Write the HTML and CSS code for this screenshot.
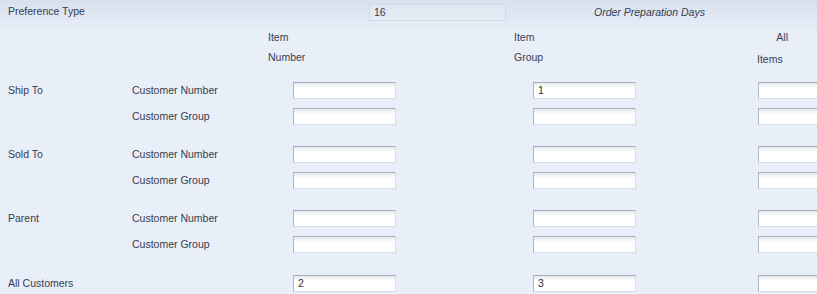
FILE: index.html
```html
<!DOCTYPE html>
<html lang="en">
<head>
  <meta charset="UTF-8" />
  <title>Preference Profile</title>
  <link rel="stylesheet" href="styles.css">
</head>
<body>
  <div class="pref-bar">
    <span class="pref-label">Preference Type</span>
    <span class="pref-value">16</span>
    <span class="pref-title">Order Preparation Days</span>
  </div>

  <div class="heads">
    <div class="head head-number">Item<br>Number</div>
    <div class="head head-group">Item<br>Group</div>
    <div class="head head-all"><span class="all">All</span><span class="items">Items</span></div>
  </div>

  <div class="group">
    <div class="row">
      <span>Ship To</span><span>Customer Number</span>
      <input type="text"><input type="text" value="1"><input type="text">
    </div>
    <div class="row">
      <span></span><span>Customer Group</span>
      <input type="text"><input type="text"><input type="text">
    </div>
  </div>

  <div class="group">
    <div class="row">
      <span>Sold To</span><span>Customer Number</span>
      <input type="text"><input type="text"><input type="text">
    </div>
    <div class="row">
      <span></span><span>Customer Group</span>
      <input type="text"><input type="text"><input type="text">
    </div>
  </div>

  <div class="group">
    <div class="row">
      <span>Parent</span><span>Customer Number</span>
      <input type="text"><input type="text"><input type="text">
    </div>
    <div class="row">
      <span></span><span>Customer Group</span>
      <input type="text"><input type="text"><input type="text">
    </div>
  </div>

  <div class="group last">
    <div class="row">
      <span>All Customers</span><span></span>
      <input type="text" value="2"><input type="text" value="3"><input type="text">
    </div>
  </div>
</body>
</html>
```

FILE: styles.css
```css
html, body {
  height: 100%;
}

body {
  margin: 0;
  overflow: hidden;
  font-family: 'Liberation Sans', Arial, sans-serif;
  font-size: 10.5px;
  color: #363d4f;
  background: linear-gradient(to bottom, #d7e0ee 0, #e9eff8 32px, #e9eff8 100%);
}

.pref-bar {
  display: flex;
  align-items: center;
  height: 24px;
  padding-left: 8px;
}

.pref-label {
  width: 361px;
  margin-top: -2px;
}

.pref-value {
  box-sizing: border-box;
  width: 137px;
  height: 17px;
  line-height: 15px;
  padding-left: 4px;
  border: 1px solid #d2d9e5;
  background: rgba(233, 239, 248, 0.4);
}

.pref-title {
  margin-left: 88px;
  font-style: italic;
}

.heads {
  display: flex;
  padding: 3px 0 0 268px;
  line-height: 20px;
}

.head-number {
  width: 246px;
}

.head-group {
  width: 243px;
}

.head-all {
  display: flex;
  flex-direction: column;
  width: 34px;
}

.head-all .all {
  align-self: flex-end;
  padding-right: 3px;
}

.head-all .items {
  margin-top: 2px;
}

.group {
  margin-top: 8px;
}

.group + .group {
  margin-top: 12px;
}

.group.last {
  margin-top: 13px;
}

.row {
  display: grid;
  grid-template-columns: 124px 161px 240px 225px 59px;
  align-items: center;
  height: 26px;
  padding-left: 8px;
}

.row input {
  box-sizing: border-box;
  width: 103px;
  height: 17px;
  margin: 0;
  padding: 0 4px;
  font-family: inherit;
  font-size: 10.5px;
  color: #2a3040;
  border: 1px solid;
  border-color: #a8aeb9 #d8dde5 #d8dde5 #b2b7c0;
  border-radius: 0;
  outline: none;
  background: linear-gradient(to bottom, #e6e8ec 0, #ffffff 5px, #ffffff 100%);
}

.row input:last-child {
  width: 59px;
  border-right: 0;
}
```
